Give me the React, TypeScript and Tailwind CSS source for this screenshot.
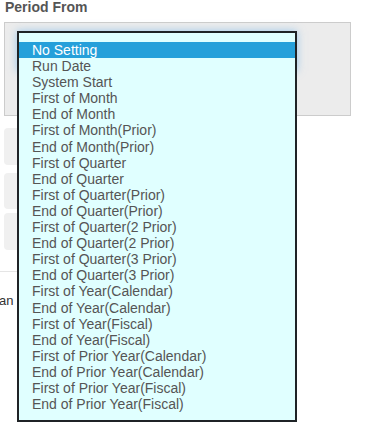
import React from 'react';

const options = [
  'No Setting',
  'Run Date',
  'System Start',
  'First of Month',
  'End of Month',
  'First of Month(Prior)',
  'End of Month(Prior)',
  'First of Quarter',
  'End of Quarter',
  'First of Quarter(Prior)',
  'End of Quarter(Prior)',
  'First of Quarter(2 Prior)',
  'End of Quarter(2 Prior)',
  'First of Quarter(3 Prior)',
  'End of Quarter(3 Prior)',
  'First of Year(Calendar)',
  'End of Year(Calendar)',
  'First of Year(Fiscal)',
  'End of Year(Fiscal)',
  'First of Prior Year(Calendar)',
  'End of Prior Year(Calendar)',
  'First of Prior Year(Fiscal)',
  'End of Prior Year(Fiscal)',
];

const App = () => {
  const selected = 0;

  return (
    <div className="relative w-[368px] h-[443px] overflow-hidden bg-white font-['Liberation_Sans',Arial,sans-serif]">
      <div className="text-[14px] leading-[14px] font-bold text-[#555] pl-[5px]">Period From</div>

      {/* field panel */}
      <div className="mt-[8px] ml-[4px] w-[347px] h-[94px] bg-[#ececec] border border-[#cccccc] pl-[12px] pt-[8px]">
        <div className="w-[280px] h-[40px] bg-white shadow-[0_0_8px_rgba(102,175,233,0.6)]" />
      </div>

      <div className="flex flex-col ml-[4px] mt-[12px]">
        <div className="w-[280px] h-[37px] rounded bg-[#f0f0f0]" />
        <div className="w-[280px] h-[36px] rounded bg-[#f0f0f0] mt-[8px]" />
        <div className="w-[280px] h-[37px] rounded bg-[#f0f0f0] mt-[4px]" />
      </div>

      <div className="mt-[21px] w-[200px] border-t border-[#e5e5e5]" />

      <div className="mt-[20px] -ml-[1px] text-[13px] leading-[18px] text-[#333]">an</div>

      {/* open dropdown list */}
      <div className="absolute left-[17px] top-[31px] w-[280px] h-[391px] border-2 border-[#1f2326] bg-[#e0ffff] pt-[9px]">
        {options.map((opt, i) => (
          <div
            key={opt}
            className={`pl-[13px] text-[14px] leading-[16.1px] h-[16.1px] whitespace-nowrap ${
              i === selected ? 'bg-[#25a0da] text-white' : 'text-[#555]'
            }`}
          >
            {opt}
          </div>
        ))}
      </div>
    </div>
  );
};

export default App;
